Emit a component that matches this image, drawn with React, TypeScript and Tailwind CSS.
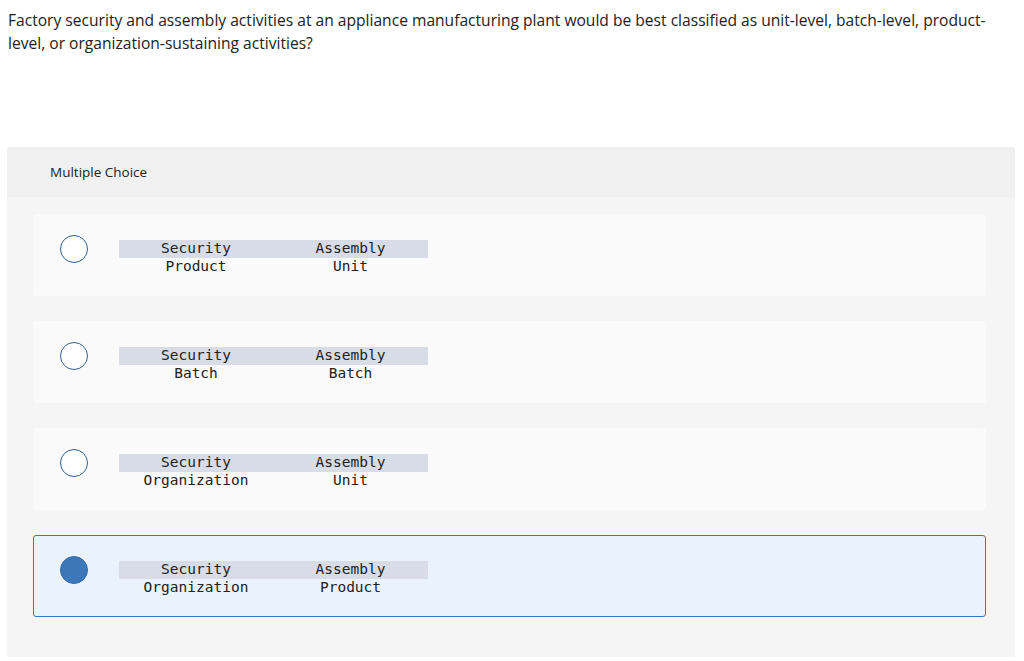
import React from 'react';

type Choice = { security: string; assembly: string; selected?: boolean };

const choices: Choice[] = [
  { security: 'Product', assembly: 'Unit' },
  { security: 'Batch', assembly: 'Batch' },
  { security: 'Organization', assembly: 'Unit' },
  { security: 'Organization', assembly: 'Product', selected: true },
];

const mono = { fontFamily: '"DejaVu Sans Mono", monospace' };

const ChoiceCard: React.FC<{ choice: Choice }> = ({ choice }) => (
  <div
    className={`h-[82px] flex items-start pl-[26px] pt-[20px] rounded-[3px] border ${
      choice.selected ? 'bg-[#eaf2fb] border-[#3b78c3]' : 'bg-[#fafafa] border-transparent'
    }`}
  >
    <div
      className={`w-[28px] h-[28px] rounded-full ${
        choice.selected ? 'bg-[#3d77b8] border border-[#2f6aa8]' : 'bg-white border-[1.5px] border-[#2f5f94]'
      }`}
    />
    <table className="ml-[31px] mt-[5px] text-[14.5px] text-[#222] leading-[17.5px]" style={mono}>
      <tbody>
        <tr className="bg-[#d8dce6]">
          <td className="w-[154px] p-0 text-center">Security</td>
          <td className="w-[155px] p-0 text-center">Assembly</td>
        </tr>
        <tr>
          <td className="p-0 text-center">{choice.security}</td>
          <td className="p-0 text-center">{choice.assembly}</td>
        </tr>
      </tbody>
    </table>
  </div>
);

export default function App() {
  return (
    <div className="w-[1024px] h-[661px] bg-white overflow-hidden" style={{ fontFamily: '"Open Sans", "Liberation Sans", sans-serif' }}>
      <p className="pl-[8px] pr-[4px] pt-[9px] text-[15.6px] leading-[23px] text-[#222]">
        Factory security and assembly activities at an appliance manufacturing plant would be best classified as unit-level, batch-level, product-level, or organization-sustaining activities?
      </p>
      <div className="mt-[92px] mx-[7px] w-[1008px] bg-[#f5f5f5] rounded-t-[3px]">
        <div className="h-[50px] bg-[#f0f0f0] flex items-center pl-[43px] text-[13.5px] text-[#222] rounded-t-[3px]">
          Multiple Choice
        </div>
        <div className="pl-[26px] pr-[29px] pt-[17px] pb-[40px] flex flex-col gap-[25px]">
          {choices.map((c, i) => (
            <ChoiceCard key={i} choice={c} />
          ))}
        </div>
      </div>
    </div>
  );
}
